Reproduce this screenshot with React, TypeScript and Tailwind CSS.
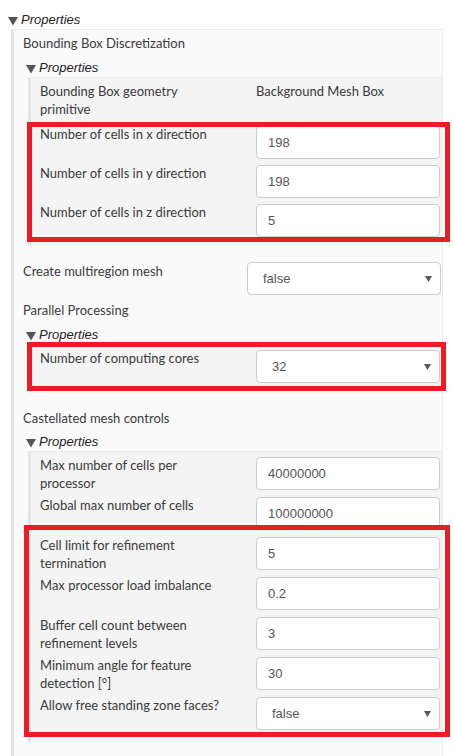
import type { ReactNode } from "react";

const labelFont = "font-['Lato','Open_Sans',sans-serif]";
const valueFont = "font-['Liberation_Sans',Arial,sans-serif]";

const Triangle = () => (
  <svg width="10" height="9" viewBox="0 0 10 9" className="mt-[3px] shrink-0">
    <path d="M0 0H10L5 8.5Z" fill="#555" />
  </svg>
);

const PropsHeader = ({ className = "" }: { className?: string }) => (
  <div className={`flex h-[19px] items-center ${className}`}>
    <Triangle />
    <span className={`ml-[3px] text-[13px] italic text-[#222] ${valueFont}`}>
      Properties
    </span>
  </div>
);

// red annotation frame drawn over a group of rows
const Mark = ({ className }: { className: string }) => (
  <div
    className={`pointer-events-none absolute border-[5px] border-[#ed1c24] ${className}`}
  />
);

const Arrow = () => (
  <svg width="7" height="6" viewBox="0 0 7 6" className="shrink-0">
    <path d="M0 0H7L3.5 6Z" fill="#555" />
  </svg>
);

const TextBox = ({ value }: { value: string }) => (
  <input
    type="text"
    readOnly
    value={value}
    className={`h-[33px] w-[184px] rounded-[4px] border border-[#ccc] bg-white pl-[11px] text-[13px] text-[#555] outline-none ${valueFont}`}
  />
);

const SelectBox = ({ value, width = "w-[184px]" }: { value: string; width?: string }) => (
  <div
    className={`flex h-[33px] items-center justify-between rounded-[4px] border border-[#ccc] bg-white pl-[15px] pr-[8px] text-[13px] text-[#555] ${width} ${valueFont}`}
  >
    <span>{value}</span>
    <Arrow />
  </div>
);

const Field = ({
  label,
  children,
  h = "h-[40px]",
}: {
  label: ReactNode;
  children: ReactNode;
  h?: string;
}) => (
  <div className={`flex items-start pl-[9px] pr-[2px] ${h}`}>
    <div className="w-[186px] leading-[18px]">{label}</div>
    <div className="ml-[30px] mt-[1px]">{children}</div>
  </div>
);

const Panel = ({ className = "", children }: { className?: string; children: ReactNode }) => (
  <div
    className={`ml-[5px] border-l-[3px] border-t border-l-[#e4e4e4] border-t-[#ebebeb] bg-[#f4f4f4] pt-[4px] ${className}`}
  >
    {children}
  </div>
);

export default function App() {
  return (
    <div
      className={`min-h-[756px] w-[453px] bg-white pl-[8px] pt-[10px] text-[13px] text-[#3a3a3a] ${labelFont}`}
    >
      <PropsHeader />

      <div className="ml-[3px] w-[432px] border-l-[3px] border-r border-t border-l-[#e4e4e4] border-r-[#ececec] border-t-[#ececec] bg-[#fafafa] pb-[40px] pl-[9px] pt-[4px]">
        <div className="leading-[18px]">Bounding Box Discretization</div>
        <PropsHeader className="ml-[3px] mt-[6px]" />
        <Panel className="pb-[4px]">
          <div className="flex h-[43px] items-start pl-[9px] pr-[2px]">
            <div className="w-[186px] leading-[18px]">
              Bounding Box geometry primitive
            </div>
            <div className="ml-[30px] leading-[18px]">Background Mesh Box</div>
          </div>
          <div className="relative">
            <Field label="Number of cells in x direction" h="h-[39px]">
              <TextBox value="198" />
            </Field>
            <Field label="Number of cells in y direction" h="h-[39px]">
              <TextBox value="198" />
            </Field>
            <Field label="Number of cells in z direction" h="h-[39px]">
              <TextBox value="5" />
            </Field>
            <Mark className="-left-[4px] -right-[8px] -top-[3px] bottom-0" />
          </div>
        </Panel>

        <div className="mt-[16px] flex items-start pr-[1px]">
          <div className="leading-[18px]">Create multiregion mesh</div>
          <div className="ml-auto">
            <SelectBox value="false" width="w-[194px]" />
          </div>
        </div>

        <div className="mt-[6px] leading-[18px]">Parallel Processing</div>
        <PropsHeader className="ml-[3px] mt-[6px]" />
        <Panel className="pb-[1px]">
          <div className="relative">
            <Field label="Number of computing cores">
              <SelectBox value="32" />
            </Field>
            <Mark className="-left-[4px] -right-[4px] -top-[7px] -bottom-[2px]" />
          </div>
        </Panel>

        <div className="mt-[19px] leading-[18px]">Castellated mesh controls</div>
        <PropsHeader className="ml-[3px] mt-[5px]" />
        <Panel className="pb-[6px]">
          <Field label="Max number of cells per processor">
            <TextBox value="40000000" />
          </Field>
          <Field label="Global max number of cells">
            <TextBox value="100000000" />
          </Field>
          <div className="relative">
            <Field label="Cell limit for refinement termination">
              <TextBox value="5" />
            </Field>
            <Field label="Max processor load imbalance">
              <TextBox value="0.2" />
            </Field>
            <Field label="Buffer cell count between refinement levels">
              <TextBox value="3" />
            </Field>
            <Field label="Minimum angle for feature detection [°]">
              <TextBox value="30" />
            </Field>
            <Field label="Allow free standing zone faces?">
              <SelectBox value="false" />
            </Field>
            <Mark className="-left-[7px] -right-[8px] -top-[11px] -bottom-[1px]" />
          </div>
        </Panel>
      </div>
    </div>
  );
}
